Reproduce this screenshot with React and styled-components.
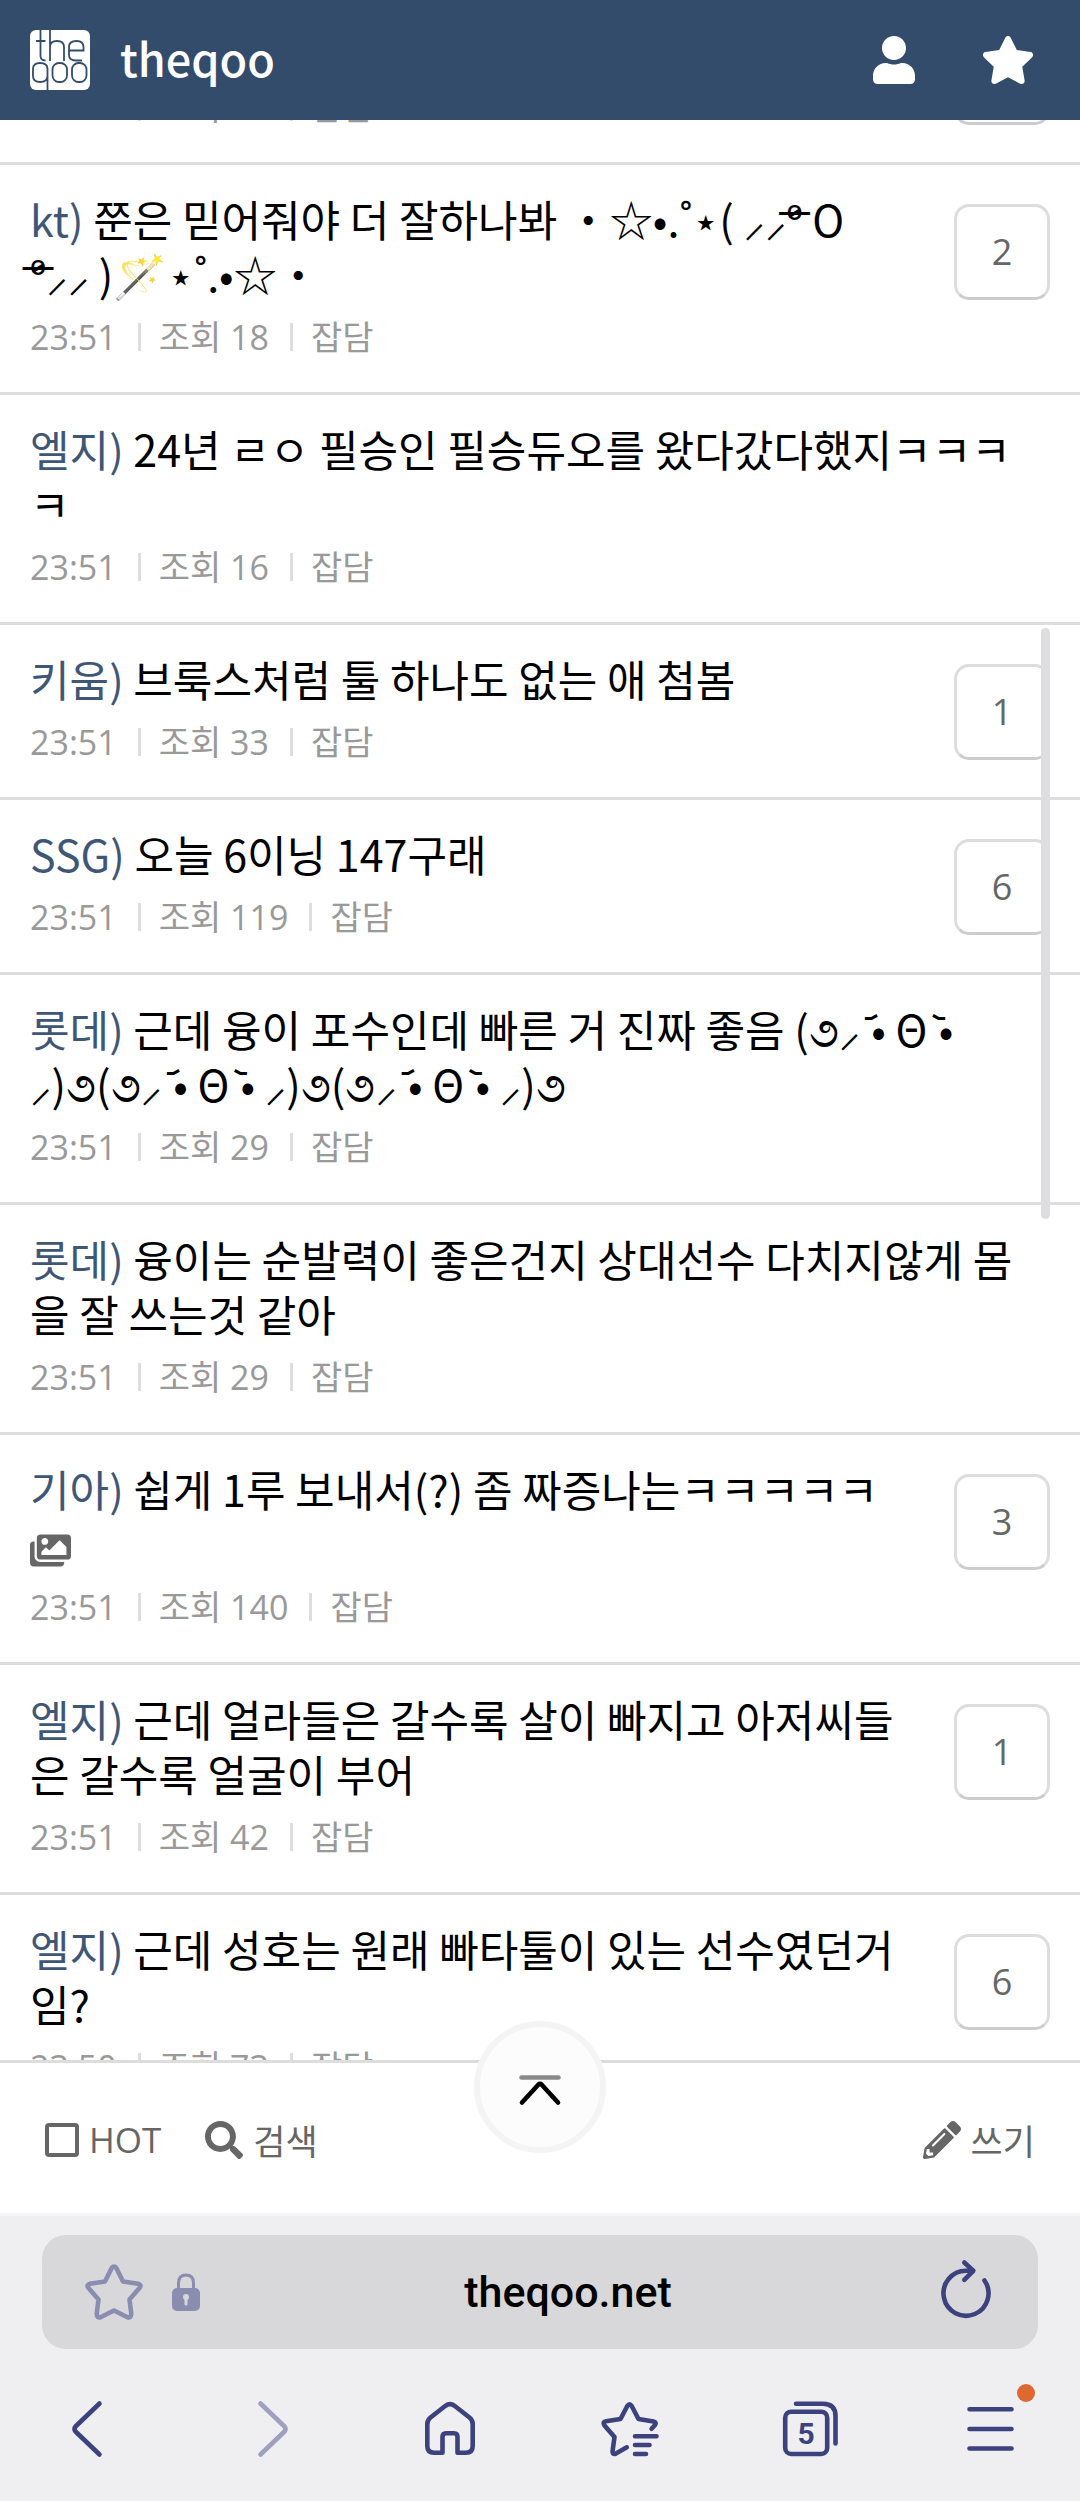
import React, { useLayoutEffect, useRef } from "react";
import styled, { createGlobalStyle } from "styled-components";
import { FaImages, FaPencilAlt, FaSearch, FaStar, FaUser } from "react-icons/fa";

const GlobalStyle = createGlobalStyle`
  * {
    box-sizing: border-box;
  }

  body {
    margin: 0;
    background-color: #fff;
    font-family: "Noto Sans CJK KR", "Noto Sans", "DejaVu Sans", sans-serif;
  }

  a {
    color: inherit;
    text-decoration: none;
  }

  button {
    padding: 0;
    border: none;
    background: none;
    color: inherit;
    font: inherit;
    cursor: pointer;
  }

  svg {
    display: block;
    overflow: visible;
  }
`;

const Page = styled.div`
  display: flex;
  flex-direction: column;
  height: 100vh;
`;

const Header = styled.header`
  display: flex;
  align-items: center;
  flex: none;
  height: 120px;
  padding: 0 45px 0 30px;
  background-color: #334c6b;
  color: #fff;
`;

const Brand = styled.a`
  display: flex;
  align-items: center;
  gap: 30px;
  flex: 1;
`;

const BrandName = styled.span`
  padding-bottom: 4px;
  font-size: 45px;
  font-weight: 500;
  line-height: 60px;
`;

const HeaderActions = styled.div`
  display: flex;
  align-items: center;
  gap: 63px;
`;

const ListFrame = styled.main`
  position: relative;
  flex: 1;
  min-height: 0;
`;

const ListScroll = styled.div`
  height: 100%;
  overflow-y: scroll;
  scrollbar-width: none;
`;

const List = styled.ul`
  margin: 0;
  padding: 0;
  list-style: none;
`;

const Row = styled.li`
  display: flex;
  gap: 30px;
  padding: 26px 30px 28px;
  border-bottom: 3px solid #ddd;
`;

const RowBody = styled.div`
  flex: 1;
  min-width: 0;
`;

const Title = styled.a`
  display: block;
  padding-right: 6px;
  color: #000;
  font-size: 43px;
  line-height: 55px;
  white-space: pre-line;
  word-break: break-all;

  svg {
    display: inline-block;
    vertical-align: middle;
    color: #666;
  }
`;

const Team = styled.span`
  color: #3f5777;
`;

const Meta = styled.div`
  display: flex;
  align-items: center;
  margin-top: 9px;
  color: #999;
  font-family: "Open Sans", "Noto Sans CJK KR", sans-serif;
  font-size: 34px;
  line-height: 54px;

  span + span {
    display: flex;
    align-items: center;
  }

  span + span::before {
    content: "";
    width: 3px;
    height: 28px;
    margin: 0 18px 0 21px;
    background-color: #ddd;
  }
`;

const Badge = styled.a`
  flex: none;
  width: 96px;
  height: 96px;
  margin-top: 13px;
  border: 3px solid #ddd;
  border-bottom-color: #ccc;
  border-radius: 15px;
  color: #666;
  font-family: "Open Sans", sans-serif;
  font-size: 36px;
  line-height: 90px;
  text-align: center;
`;

const ScrollThumb = styled.div`
  position: absolute;
  top: 508px;
  right: 30px;
  width: 9px;
  height: 591px;
  border-radius: 5px;
  background-color: #dedee0;
`;

const Toolbar = styled.div`
  position: relative;
  display: flex;
  align-items: center;
  flex: none;
  gap: 44px;
  height: 156px;
  padding: 4px 45px 0;
  border-top: 3px solid #ddd;
  border-bottom: 3px solid #f6f6f8;
  background-color: #fff;
  color: #666;
  font-size: 35px;
  line-height: 48px;
`;

const HotLabel = styled.label`
  display: flex;
  align-items: center;
  gap: 10px;
  font-family: "Open Sans", sans-serif;
`;

const HotCheckbox = styled.input`
  appearance: none;
  width: 34px;
  height: 34px;
  margin: 0;
  border: 4px solid #666;
  border-radius: 4px;

  &:checked {
    background-color: #666;
  }
`;

const ToolButton = styled.button`
  display: flex;
  align-items: center;
  gap: 10px;
`;

const Spacer = styled.div`
  flex: 1;
`;

const TopButton = styled.button`
  position: absolute;
  top: -42px;
  left: calc(50% - 66px);
  display: flex;
  align-items: center;
  justify-content: center;
  width: 132px;
  height: 132px;
  border: 6px solid #f4f4f4;
  border-radius: 50%;
  background-color: #fcfcfc;
`;

const Browser = styled.footer`
  flex: none;
  padding: 19px 0 36px;
  background-color: #efeff2;
`;

const AddressBar = styled.div`
  display: flex;
  align-items: center;
  height: 114px;
  margin: 0 42px;
  padding: 0 42px;
  border-radius: 24px;
  background-color: #d8d8da;
  color: #8b8db0;
`;

const LockIcon = styled.svg`
  margin-left: 28px;
`;

const Address = styled.span`
  flex: 1;
  color: #000;
  font-family: Roboto, sans-serif;
  font-size: 43px;
  font-weight: 500;
  line-height: 56px;
  text-align: center;
`;

const ReloadButton = styled.button`
  color: #3c427d;
`;

const BrowserNav = styled.nav`
  display: grid;
  grid-template-columns: repeat(6, 1fr);
  justify-items: center;
  padding-top: 44px;
  color: #3c427d;
`;

const NavButton = styled.button`
  position: relative;

  &:disabled {
    color: #9fa0c0;
  }
`;

const Dot = styled.span`
  position: absolute;
  top: -9px;
  right: -9px;
  width: 18px;
  height: 18px;
  border-radius: 50%;
  background-color: #dd6830;
`;

const Logo = () => (
  <svg width="60" height="60" viewBox="0 0 60 60" fill="none" stroke="#334c6b" strokeWidth="1.8">
    <rect width="60" height="60" rx="6" fill="#fff" stroke="none" />
    <path d="M10.500 0 V26 Q10.500 30.500 15.500 30.500 M6 11 H15.500" />
    <path d="M20 0 V31 M20 17 Q20 11 27 11 Q34 11 34 17 V31" />
    <path d="M39 20.500 H53.500 V17 Q53.500 11 46.500 11 Q39 11 39 17 V25 Q39 30.500 46 30.500 H52" />
    <path d="M17.500 60 V39 Q17.500 33 10 33 Q3 33 3 39 V46 Q3 52 10 52 Q17.500 52 17.500 46" />
    <rect x="22.500" y="33" width="14.500" height="19" rx="6.500" />
    <rect x="42" y="33" width="14.500" height="19" rx="6.500" />
  </svg>
);

const Stroke = ({ size = 72, children }) => (
  <svg
    width={size}
    height={size}
    viewBox={`0 0 ${size} ${size}`}
    fill="none"
    stroke="currentColor"
    strokeWidth="4.6"
    strokeLinecap="round"
    strokeLinejoin="round"
  >
    {children}
  </svg>
);

const posts = [
  { team: "두산", title: "오늘 경기 재밌다", time: "23:51", views: 24, comments: 1 },
  {
    team: "kt",
    title: "쭌은 믿어줘야 더 잘하나봐 ・☆•.˚⋆( ⸝⸝º̶̷ O\nº̶̷⸝⸝ )🪄⋆˚.•☆・",
    time: "23:51",
    views: 18,
    comments: 2,
  },
  {
    team: "엘지",
    title: "24년 ㄹㅇ 필승인 필승듀오를 왔다갔다했지ㅋㅋㅋㅋ",
    time: "23:51",
    views: 16,
  },
  { team: "키움", title: "브룩스처럼 툴 하나도 없는 애 첨봄", time: "23:51", views: 33, comments: 1 },
  { team: "SSG", title: "오늘 6이닝 147구래", time: "23:51", views: 119, comments: 6 },
  {
    team: "롯데",
    title:
      "근데 융이 포수인데 빠른 거 진짜 좋음 (૭⸝\u00a0᷄• Θ\u00a0᷅•\n⸝)૭(૭⸝\u00a0᷄• Θ\u00a0᷅• ⸝)૭(૭⸝\u00a0᷄• Θ\u00a0᷅• ⸝)૭",
    time: "23:51",
    views: 29,
  },
  {
    team: "롯데",
    title: "융이는 순발력이 좋은건지 상대선수 다치지않게 몸을 잘 쓰는것 같아",
    time: "23:51",
    views: 29,
  },
  {
    team: "기아",
    title: "쉽게 1루 보내서(?) 좀 짜증나는ㅋㅋㅋㅋㅋ",
    time: "23:51",
    views: 140,
    comments: 3,
    hasImage: true,
  },
  {
    team: "엘지",
    title: "근데 얼라들은 갈수록 살이 빠지고 아저씨들은 갈수록 얼굴이 부어",
    time: "23:51",
    views: 42,
    comments: 1,
  },
  {
    team: "엘지",
    title: "근데 성호는 원래 빠타툴이 있는 선수였던거임?",
    time: "23:50",
    views: 73,
    comments: 6,
  },
];

const Post = ({ post }) => (
  <Row>
    <RowBody>
      <Title href="#post">
        <Team>{post.team})</Team> {post.title}
        {post.hasImage && (
          <>
            {" "}
            <FaImages size={41} />
          </>
        )}
      </Title>
      <Meta>
        <span>{post.time}</span>
        <span>조회 {post.views}</span>
        <span>잡담</span>
      </Meta>
    </RowBody>
    {post.comments && <Badge href="#comments">{post.comments}</Badge>}
  </Row>
);

const App = () => {
  const scrollRef = useRef(null);

  // the list opens slightly scrolled, under the header
  useLayoutEffect(() => {
    scrollRef.current.scrollTop = 130;
  }, []);

  return (
    <>
      <GlobalStyle />
      <Page>
        <Header>
          <Brand href="#home">
            <Logo />
            <BrandName>theqoo</BrandName>
          </Brand>
          <HeaderActions>
            <button type="button" aria-label="내 정보">
              <FaUser size={48} />
            </button>
            <button type="button" aria-label="즐겨찾기">
              <FaStar size={54} />
            </button>
          </HeaderActions>
        </Header>

        <ListFrame>
          <ListScroll ref={scrollRef}>
            <List>
              {posts.map((post, index) => (
                <Post key={index} post={post} />
              ))}
            </List>
          </ListScroll>
          <ScrollThumb />
        </ListFrame>

        <Toolbar>
          <HotLabel>
            <HotCheckbox type="checkbox" />
            HOT
          </HotLabel>
          <ToolButton type="button">
            <FaSearch size={38} />
            검색
          </ToolButton>
          <Spacer />
          <ToolButton type="button">
            <FaPencilAlt size={38} />
            쓰기
          </ToolButton>
          <TopButton type="button" aria-label="맨 위로">
            <Stroke size={60}>
              <path d="M11.500 20.500 H48.500" stroke="#8a8a8a" />
              <path d="M12 45.500 L28.500 27.500 Q30 26 31.500 27.500 L48 45.500" stroke="#000" />
            </Stroke>
          </TopButton>
        </Toolbar>

        <Browser>
          <AddressBar>
            <Stroke size={60}>
              <path d="M27.700 6 Q30 3 32.300 6 L39 19.500 L54 21.700 Q58 22.800 55.500 26 L45.500 37.500 L47.300 52 Q47 56.500 43 55 L30 48.500 L17 55 Q13 56.500 12.700 52 L14.500 37.500 L4.500 26 Q2 22.800 6 21.700 L21 19.500 Z" />
            </Stroke>
            <LockIcon width="28" height="60" viewBox="0 0 28 60">
              <path d="M6.500 28 V21 Q6.500 13 14 13 Q21.500 13 21.500 21 V28" fill="none" stroke="currentColor" strokeWidth="3" />
              <rect y="26" width="28" height="23" rx="5" fill="currentColor" />
              <circle cx="14" cy="35" r="3" fill="#d8d8da" />
              <path d="M14 35 V42" stroke="#d8d8da" strokeWidth="3" strokeLinecap="round" />
            </LockIcon>
            <Address>theqoo.net</Address>
            <ReloadButton type="button" aria-label="새로고침">
              <Stroke size={60}>
                <path d="M48.500 18.500 A22.500 22.500 0 1 1 30 8.800 H37" />
                <path d="M28.300 0.500 L37.300 8.800 L28.300 17.800" />
              </Stroke>
            </ReloadButton>
          </AddressBar>

          <BrowserNav>
            <NavButton type="button" aria-label="뒤로">
              <Stroke>
                <path d="M45.500 10.500 L21.500 33.500 Q19.500 36 21.500 38.500 L45.500 61.500" />
              </Stroke>
            </NavButton>
            <NavButton type="button" aria-label="앞으로" disabled>
              <Stroke>
                <path d="M26.500 10.500 L50.500 33.500 Q52.500 36 50.500 38.500 L26.500 61.500" />
              </Stroke>
            </NavButton>
            <NavButton type="button" aria-label="홈">
              <Stroke>
                <path d="M28.500 59.700 H20 Q13.300 59.700 13.300 53 V31 Q13.300 27 16.500 24.500 L31.500 12.800 Q36 9.500 40.500 12.800 L55.500 24.500 Q58.700 27 58.700 31 V53 Q58.700 59.700 52 59.700 H43.500 V44 Q43.500 40.300 40 40.300 H32 Q28.500 40.300 28.500 44 Z" />
              </Stroke>
            </NavButton>
            <NavButton type="button" aria-label="북마크">
              <Stroke>
                <path d="M32.800 54.300 L21.500 60.700 Q18.500 61.500 18.500 58.500 L20.500 44 L10.500 32.500 Q8 29 12 28.300 L26.500 26 L33.300 13 Q35.500 9.500 37.700 13 L44.500 26 L59.500 28.500 Q63 29.500 61 32 L57.600 35.700" />
                <path d="M41 43.300 H62.500 M41 52 H55.500 M41 61 H52" />
              </Stroke>
            </NavButton>
            <NavButton type="button" aria-label="탭 5개">
              <Stroke>
                <rect x="11.200" y="18.700" width="42" height="42.300" rx="6" />
                <path d="M22 10.700 H49 Q61.500 10.700 61.500 23 V50.500" />
                <text x="32" y="51" textAnchor="middle" fontFamily="Roboto, sans-serif" fontSize="30" fontWeight="700" fill="currentColor" stroke="none">
                  5
                </text>
              </Stroke>
            </NavButton>
            <NavButton type="button" aria-label="메뉴">
              <Stroke>
                <path d="M15.500 16.300 H57.500 M15.500 36 H57.500 M15.500 55.500 H57.500" />
              </Stroke>
              <Dot />
            </NavButton>
          </BrowserNav>
        </Browser>
      </Page>
    </>
  );
};

export default App;
